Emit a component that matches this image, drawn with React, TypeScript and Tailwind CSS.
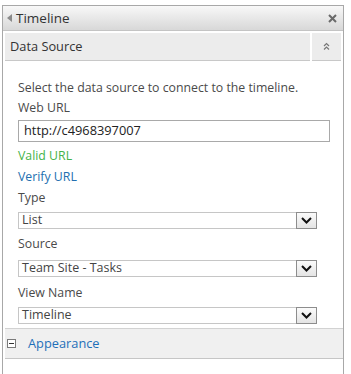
import { FC } from "react";

const font = { fontFamily: '"Open Sans", "Noto Sans", sans-serif' };

const SelectBox: FC<{ value: string }> = ({ value }) => (
  <div className="flex h-[17px] w-[299px] items-center border border-[#c6c6c6] bg-white">
    <span className="flex-1 pl-[3px] text-[12.5px] leading-none text-[#444]">{value}</span>
    <div className="flex h-[17px] w-[21px] -mr-px items-center justify-center border border-[#8d8d8d] bg-gradient-to-b from-[#fbfbfb] to-[#e4e4e4]">
      <svg width="11" height="7" viewBox="0 0 11 7">
        <path d="M1 1 L5.5 5.5 L10 1" fill="none" stroke="#111" strokeWidth="2" />
      </svg>
    </div>
  </div>
);

const App: FC = () => {
  return (
    <div className="h-[374px] w-[351px] bg-white" style={font}>
      <div className="ml-[2px] pt-[5px]">
        <div className="h-[369px] w-[342px] border-x border-t border-[#a8a8a8]">
          <div className="flex h-[25px] items-center border-b border-[#c4c4c4] bg-gradient-to-b from-[#f8f8f8] to-[#d8d8d8] pl-[4px] pr-[6px]">
            <svg width="5" height="8" viewBox="0 0 5 8" className="mr-[4px]">
              <path d="M5 0 L0 4 L5 8 Z" fill="#8a8a8a" />
            </svg>
            <span className="flex-1 text-[13.5px] text-[#333]">Timeline</span>
            <svg width="9" height="9" viewBox="0 0 9 9">
              <path d="M1 1 L8 8 M8 1 L1 8" stroke="#6a6a6a" strokeWidth="2" />
            </svg>
          </div>
          <div className="mt-[2px] flex h-[28px] gap-[2px] px-[2px]">
            <div className="flex flex-1 items-center border-b border-[#c8c8c8] bg-[#ececec] pl-[5px] text-[12.8px] text-[#333]">
              Data Source
            </div>
            <div className="flex w-[29px] items-center justify-center border-b border-[#c8c8c8] bg-[#ececec]">
              <svg width="7" height="9" viewBox="0 0 7 9">
                <path d="M1 4 L3.5 1.5 L6 4 M1 7.5 L3.5 5 L6 7.5" fill="none" stroke="#777" strokeWidth="1.2" />
              </svg>
            </div>
          </div>
          <div className="pl-[15px] pt-[17px] text-[12.3px] text-[#4a4a4a]">
            <div className="h-[20px] leading-[20px]">Select the data source to connect to the timeline.</div>
            <div className="h-[20px] leading-[20px]">Web URL</div>
            <div className="mt-[2px] flex h-[22px] w-[312px] items-center border border-[#a9a9a9] pl-[5px] text-[12.8px] text-[#222]">
              http://c4968397007
            </div>
            <div className="mt-[4px] h-[20px] leading-[20px] text-[#45b34a]">Valid URL</div>
            <div className="mt-px h-[20px] leading-[20px] text-[#236fb0]">Verify URL</div>
            <div className="mt-px h-[20px] leading-[20px]">Type</div>
            <div className="mt-[4px]">
              <SelectBox value="List" />
            </div>
            <div className="mt-[5px] h-[20px] leading-[20px]">Source</div>
            <div className="mt-[6px]">
              <SelectBox value="Team Site - Tasks" />
            </div>
            <div className="mt-[6px] h-[20px] leading-[20px]">View Name</div>
            <div className="mt-[4px]">
              <SelectBox value="Timeline" />
            </div>
          </div>
          <div className="mt-[4px] ml-[2px] flex h-[31px] items-center border-y border-t-[#d2d2d2] border-b-[#c6c6c6] bg-[#f0f0f0] pl-[2px]">
            <div className="mr-[12px] flex h-[9px] w-[9px] items-center justify-center border border-[#7a7a7a] bg-white">
              <div className="h-px w-[5px] bg-[#333]" />
            </div>
            <span className="text-[12.8px] text-[#1e6fb9]">Appearance</span>
          </div>
        </div>
      </div>
    </div>
  );
};

export default App;
